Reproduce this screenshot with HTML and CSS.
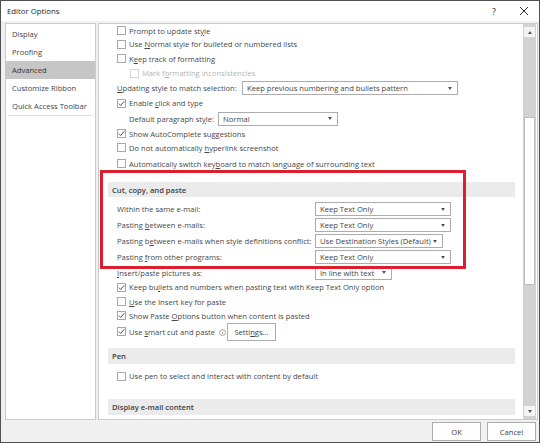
FILE: index.html
```html
<!DOCTYPE html>
<html>
<head>
<meta charset="utf-8">
<title>Editor Options</title>
<link rel="stylesheet" href="styles.css">
</head>
<body>
<div class="win">
  <div class="titlebar">
    <span class="title">Editor Options</span>
    <span class="tb-btn">?</span>
    <span class="tb-btn">
      <svg width="10" height="10" viewBox="0 0 10 10"><path d="M1 1 L9 9 M9 1 L1 9" stroke="#333" stroke-width="1" fill="none"/></svg>
    </span>
  </div>
  <div class="main">
    <nav class="nav">
      <div class="nav-item">Display</div>
      <div class="nav-item">Proofing</div>
      <div class="nav-item sel">Advanced</div>
      <div class="nav-item">Customize Ribbon</div>
      <div class="nav-item">Quick Access Toolbar</div>
      <div class="nav-sep"></div>
    </nav>
    <div class="panel">
      <div class="content">
        <div class="row h13"><span class="cb"></span><span>Prompt to update st<u>y</u>le</span></div>
        <div class="row h14"><span class="cb"></span><span>Use <u>N</u>ormal style for bulleted or numbered lists</span></div>
        <div class="row"><span class="cb"></span><span>K<u>e</u>ep track of formatting</span></div>
        <div class="row h14 sub dis"><span class="cb"></span><span>Mark f<u>o</u>rmatting inconsistencies</span></div>
        <div class="row h16"><span class="lbl w125"><u>U</u>pdating style to match selection:</span><span class="dd w216"><span class="dd-t">Keep previous numbering and bullets pattern</span><span class="arr"></span></span></div>
        <div class="row h14"><span class="cb on"><svg width="7" height="7" viewBox="0 0 7 7"><path d="M0.8 3.6 L2.7 5.5 L6.3 1.2" stroke="#444" stroke-width="0.9" fill="none"/></svg></span><span>Enable <u>c</u>lick and type</span></div>
        <div class="row h17 ind"><span class="lbl w89">Default paragraph st<u>y</u>le:</span><span class="dd w120"><span class="dd-t">Normal</span><span class="arr"></span></span></div>
        <div class="row h13"><span class="cb on"><svg width="7" height="7" viewBox="0 0 7 7"><path d="M0.8 3.6 L2.7 5.5 L6.3 1.2" stroke="#444" stroke-width="0.9" fill="none"/></svg></span><span>Show AutoComplete suggestions</span></div>
        <div class="row"><span class="cb"></span><span>Do not automatically <u>h</u>yperlink screenshot</span></div>
        <div class="row h17"><span class="cb"></span><span>Automatically switch key<u>b</u>oard to match language of surrounding text</span></div>

        <div class="sec first">Cut, copy, and paste</div>
        <div class="row h16"><span class="lbl w198">Within the same e-mail:</span><span class="dd w136"><span class="dd-t">Keep Text Only</span><span class="arr"></span></span></div>
        <div class="row h16"><span class="lbl w198">Pasting <u>b</u>etween e-mails:</span><span class="dd w136"><span class="dd-t">Keep Text Only</span><span class="arr"></span></span></div>
        <div class="row h16"><span class="lbl w198">Pasting b<u>e</u>tween e-mails when style definitions conflict:</span><span class="dd w128"><span class="dd-t">Use Destination Styles (Default)</span><span class="arr"></span></span></div>
        <div class="row h16"><span class="lbl w198">Pasting <u>f</u>rom other programs:</span><span class="dd w136"><span class="dd-t">Keep Text Only</span><span class="arr"></span></span></div>
        <div class="row"><span class="lbl w198"><u>I</u>nsert/paste pictures as:</span><span class="dd w77"><span class="dd-t">In line with text</span><span class="arr"></span></span></div>
        <div class="row h14"><span class="cb on"><svg width="7" height="7" viewBox="0 0 7 7"><path d="M0.8 3.6 L2.7 5.5 L6.3 1.2" stroke="#444" stroke-width="0.9" fill="none"/></svg></span><span>Keep bu<u>l</u>lets and numbers when pasting text with Keep Text Only option</span></div>
        <div class="row"><span class="cb"></span><span><u>U</u>se the Insert key for paste</span></div>
        <div class="row h13"><span class="cb on"><svg width="7" height="7" viewBox="0 0 7 7"><path d="M0.8 3.6 L2.7 5.5 L6.3 1.2" stroke="#444" stroke-width="0.9" fill="none"/></svg></span><span>Show Paste <u>O</u>ptions button when content is pasted</span></div>
        <div class="row h19"><span class="cb on"><svg width="7" height="7" viewBox="0 0 7 7"><path d="M0.8 3.6 L2.7 5.5 L6.3 1.2" stroke="#444" stroke-width="0.9" fill="none"/></svg></span><span class="lbl w98">Use <u>s</u>mart cut and paste <svg class="info" width="7" height="7" viewBox="0 0 8 8"><circle cx="4" cy="4" r="3.4" stroke="#777" stroke-width="0.7" fill="none"/><path d="M4 3.4 V6" stroke="#777" stroke-width="0.8"/><circle cx="4" cy="2.2" r="0.5" fill="#777"/></svg></span><span class="btn">Setti<u>n</u>gs...</span></div>

        <div class="sec pen">Pen</div>
        <div class="row h16 penrow"><span class="cb"></span><span>Use pen to select and interact with content by default</span></div>

        <div class="sec disp">Display e-mail content</div>
      </div>
      <div class="scrollbar">
        <div class="sb-btn"><span class="up"></span></div>
        <div class="sb-pre"></div>
        <div class="sb-thumb"></div>
        <div class="sb-fill"></div>
        <div class="sb-btn"><span class="down"></span></div>
      </div>
    </div>
  </div>
  <div class="footer">
    <span class="fbtn">OK</span>
    <span class="fbtn">Cancel</span>
  </div>
  <div class="highlight"></div>
</div>
</body>
</html>
```

FILE: styles.css
```css
* { box-sizing: border-box; }
html, body { margin: 0; padding: 0; }
body {
  width: 540px;
  height: 443px;
  overflow: hidden;
  background: #ffffff;
  font-family: "Open Sans", "Noto Sans", sans-serif;
  font-size: 7.6px;
  color: #474747;
}
u { text-decoration: underline; text-underline-offset: 1px; }

.win {
  position: relative;
  width: 540px;
  height: 443px;
  border: 1px solid #505050;
  background: #f0f0f0;
  display: flex;
  flex-direction: column;
}

.titlebar {
  height: 20px;
  background: #ffffff;
  display: flex;
  align-items: center;
  padding-left: 6px;
  flex: none;
}
.title { flex: 1; font-size: 7.8px; color: #1e1e1e; }
.tb-btn {
  width: 30px;
  height: 20px;
  display: flex;
  align-items: center;
  justify-content: center;
  font-size: 9px;
  color: #333;
}

.main {
  height: 399px;
  flex: none;
  display: flex;
  gap: 2px;
  padding: 2px 1px 0 4px;
}

.nav {
  width: 91px;
  flex: none;
  background: #ffffff;
  border: 1px solid #cacaca;
  padding-top: 1px;
}
.nav-item {
  height: 18px;
  display: flex;
  align-items: center;
  padding-left: 6px;
  white-space: nowrap;
  color: #454545;
}
.nav-item.sel { background: #c6c6c6; color: #333; }
.nav-sep { margin: 0 2px; border-top: 1px solid #e2e2e2; }

.panel {
  flex: 1;
  display: flex;
  background: #ffffff;
  border: 1px solid #cacaca;
  overflow: hidden;
}
.content {
  flex: 1;
  overflow: hidden;
  display: flex;
  flex-direction: column;
}

.row {
  height: 15px;
  flex: none;
  display: flex;
  align-items: center;
  padding-left: 18px;
  white-space: nowrap;
}
.h13 { height: 13px; }
.h14 { height: 14px; }
.h16 { height: 16px; }
.h17 { height: 17px; }
.h19 { height: 19px; }
.row.sub { padding-left: 31px; }
.row.ind { padding-left: 30px; }
.row.dis { color: #b4b4b4; }

.cb {
  width: 9px;
  height: 9px;
  flex: none;
  border: 1px solid #a8a8a8;
  background: #ffffff;
  margin-right: 3px;
  display: flex;
  align-items: center;
  justify-content: center;
}
.row.dis .cb { border-color: #d8d8d8; }

.lbl { flex: none; display: block; white-space: nowrap; }
.w125 { width: 125px; }
.w89 { width: 89px; }
.w198 { width: 198px; }
.w98 { width: 98px; }
.info { margin-left: 2px; vertical-align: -1px; }

.dd {
  height: 14px;
  flex: none;
  border: 1px solid #acacac;
  background: #ffffff;
  display: flex;
  align-items: center;
  padding-left: 4px;
  overflow: hidden;
}
.dd-t { white-space: nowrap; color: #444; }
.arr {
  margin-left: auto;
  margin-right: 5px;
  width: 0;
  height: 0;
  border-left: 2.5px solid transparent;
  border-right: 2.5px solid transparent;
  border-top: 3px solid #555;
  flex: none;
}
.w216 { width: 216px; }
.w120 { width: 120px; }
.w136 { width: 136px; }
.w128 { width: 128px; }
.w77 { width: 77px; }

.btn {
  width: 49px;
  height: 18px;
  flex: none;
  border: 1px solid #adadad;
  background: #fdfdfd;
  display: flex;
  align-items: center;
  justify-content: center;
  color: #444;
}

.sec {
  flex: none;
  width: 407px;
  height: 15px;
  margin-left: 9px;
  background: #ebebeb;
  padding-left: 4px;
  display: flex;
  align-items: center;
  font-weight: 600;
  color: #404040;
  white-space: nowrap;
}
.sec.first { margin-top: 10px; margin-bottom: 4px; }
.sec.pen { margin-top: 7px; height: 16px; }
.row.penrow { margin-top: 4px; }
.sec.disp { margin-top: 15px; height: 16px; }

.scrollbar {
  width: 13px;
  flex: none;
  margin-right: 1px;
  background: #d2d2d2;
  display: flex;
  flex-direction: column;
  padding: 3px 1px;
}
.sb-btn {
  height: 10px;
  flex: none;
  background: #f4f4f4;
  display: flex;
  align-items: center;
  justify-content: center;
}
.sb-pre { height: 80px; flex: none; }
.sb-thumb {
  height: 168px;
  flex: none;
  background: #ffffff;
  border: 1px solid #bdbdbd;
}
.sb-fill { flex: 1; }
.up, .down {
  width: 0;
  height: 0;
  border-left: 2.5px solid transparent;
  border-right: 2.5px solid transparent;
}
.up { border-bottom: 3px solid #555; }
.down { border-top: 3px solid #555; }

.footer {
  flex: 1;
  display: flex;
  justify-content: flex-end;
  align-items: flex-start;
  gap: 6px;
  padding: 2px 3px 0 0;
}
.fbtn {
  width: 49px;
  height: 19px;
  border: 1px solid #adadad;
  background: #fdfdfd;
  display: flex;
  align-items: center;
  justify-content: center;
  color: #444;
}

.highlight {
  position: absolute;
  left: 99px;
  top: 169px;
  width: 366px;
  height: 99px;
  border: 3px solid #db1f2e;
  pointer-events: none;
}
```
